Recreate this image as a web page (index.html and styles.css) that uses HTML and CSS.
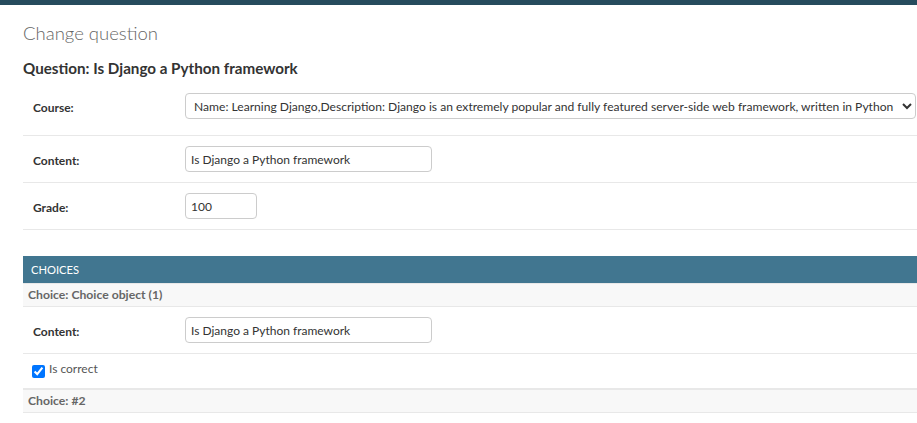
FILE: index.html
```html
<!DOCTYPE html>
<html lang="en">
<head>
<meta charset="utf-8">
<title>Change question</title>
<link rel="stylesheet" href="styles.css">
</head>
<body>
<div class="topbar"></div>
<main class="content">
  <h1 class="page-title">Change question</h1>
  <h2 class="object-title">Question: Is Django a Python framework</h2>
  <div class="fieldset">
    <div class="form-row form-row-select">
      <label class="field-label" for="id_course">Course:</label>
      <select class="field-select" id="id_course">
        <option>Name: Learning Django,Description: Django is an extremely popular and fully featured server-side web framework, written in Python</option>
      </select>
    </div>
    <div class="form-row">
      <label class="field-label" for="id_content">Content:</label>
      <input class="field-input field-text" id="id_content" type="text" value="Is Django a Python framework">
    </div>
    <div class="form-row">
      <label class="field-label" for="id_grade">Grade:</label>
      <input class="field-input field-number" id="id_grade" type="text" value="100">
    </div>
  </div>

  <section class="inline-group">
    <h2 class="module-caption">Choices</h2>
    <div class="inline-related">
      <h3 class="inline-title">Choice: Choice object (1)</h3>
      <div class="form-row">
        <label class="field-label" for="id_choice_1">Content:</label>
        <input class="field-input field-text" id="id_choice_1" type="text" value="Is Django a Python framework">
      </div>
      <div class="form-row checkbox-row">
        <input class="field-checkbox" id="id_correct_1" type="checkbox" checked>
        <label class="checkbox-label" for="id_correct_1">Is correct</label>
      </div>
    </div>
    <div class="inline-related">
      <h3 class="inline-title">Choice: #2</h3>
      <div class="form-row">
        <label class="field-label" for="id_choice_2">Content:</label>
        <input class="field-input field-text" id="id_choice_2" type="text" value="">
      </div>
    </div>
  </section>
</main>
</body>
</html>
```
FILE: styles.css
```css
html, body {
  margin: 0;
  padding: 0;
  overflow: hidden;
  background: #fff;
}
body {
  font-family: Lato, "Open Sans", sans-serif;
  color: #333;
}
.topbar {
  height: 5px;
  background: #264b5d;
}
.content {
  margin-left: 23px;
  padding-top: 16px;
}
.page-title {
  margin: 0;
  font-size: 18.5px;
  line-height: 24px;
  font-weight: 300;
  color: #666;
}
.object-title {
  margin: 14px 0 0;
  font-size: 15.2px;
  line-height: 18px;
  font-weight: 700;
  color: #333;
}
.fieldset {
  margin-top: 6px;
}
.form-row {
  display: grid;
  grid-template-columns: 152px 1fr;
  align-items: start;
  padding: 10px;
  border-bottom: 1px solid #e8e8e8;
}
.form-row-select {
  padding-bottom: 16px;
}
.field-label {
  font-size: 12px;
  font-weight: 700;
  color: #333;
  line-height: 22px;
  padding-top: 4px;
}
.field-select {
  width: 731px;
  height: 26px;
  box-sizing: border-box;
  border: 1px solid #ccc;
  border-radius: 4px;
  background: #fff;
  color: #333;
  font-family: Lato, "Open Sans", sans-serif;
  font-size: 12.1px;
  padding: 0 4px;
  margin: 0;
}
.field-input {
  height: 26px;
  box-sizing: border-box;
  border: 1px solid #ccc;
  border-radius: 4px;
  background: #fff;
  color: #333;
  font-family: Lato, "Open Sans", sans-serif;
  font-size: 12px;
  padding: 0 5px;
  margin: 0;
  outline: none;
}
.field-text {
  width: 247px;
}
.field-number {
  width: 72px;
}
.inline-group {
  margin-top: 26px;
}
.module-caption {
  margin: 0;
  height: 27px;
  line-height: 27px;
  padding-left: 8px;
  background: #417690;
  color: #fff;
  font-size: 11.2px;
  font-weight: 400;
  text-transform: uppercase;
  letter-spacing: 0;
}
.inline-title {
  margin: 0;
  height: 22px;
  line-height: 22px;
  padding-left: 5px;
  background: #f8f8f8;
  border-top: 1px solid #e8e8e8;
  border-bottom: 1px solid #e8e8e8;
  color: #666;
  font-size: 12.2px;
  font-weight: 700;
}
.checkbox-row {
  display: flex;
  align-items: flex-start;
  height: 14px;
  padding-left: 9px;
}
.field-checkbox {
  width: 13px;
  height: 13px;
  margin: 1px 0 0 0;
  accent-color: #0075ff;
}
.checkbox-label {
  font-size: 12px;
  line-height: 12px;
  color: #555;
  margin-top: -1px;
  padding-left: 4px;
}
```
